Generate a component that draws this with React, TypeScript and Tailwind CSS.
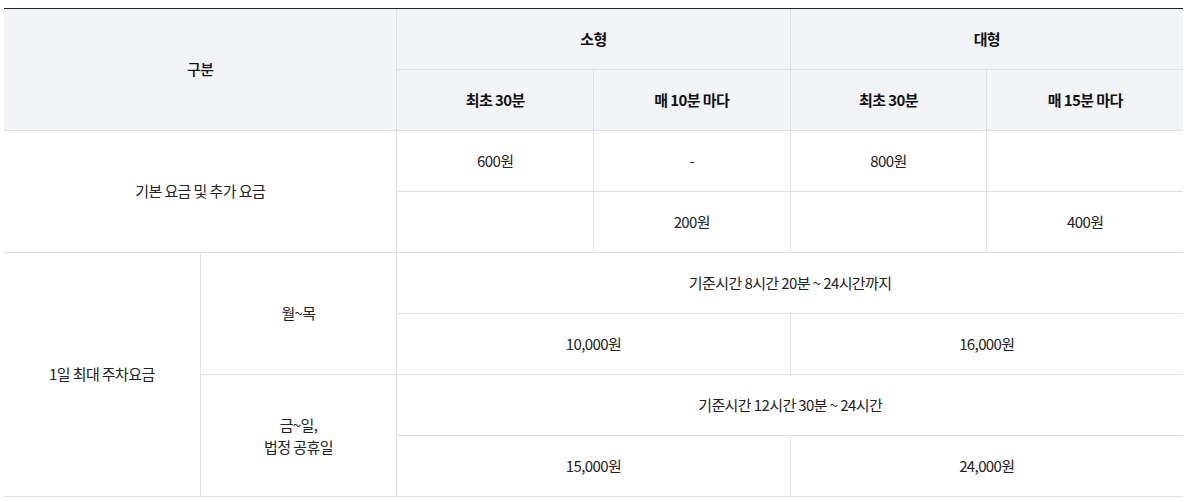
import React from 'react';

const th = 'flex items-center justify-center bg-[#f3f4f8] font-bold text-[#111]';
const td = 'flex items-center justify-center bg-white text-[#222] text-center';

export default function App() {
  return (
    <div className="bg-white min-h-[502px] pt-2 pl-1 font-['Noto_Sans_CJK_KR','Noto_Sans',sans-serif] text-[15px] tracking-[-0.04em]">
      <div className="w-[1179px] border-t border-[#222] bg-[#dde0e5] pb-px grid grid-cols-6 grid-rows-[repeat(8,60px)] gap-px">
        {/* header */}
        <div className={`${th} col-span-2 row-span-2 font-medium`}>구분</div>
        <div className={`${th} col-span-2`}>소형</div>
        <div className={`${th} col-span-2`}>대형</div>
        <div className={th}>최초 30분</div>
        <div className={th}>매 10분 마다</div>
        <div className={th}>최초 30분</div>
        <div className={th}>매 15분 마다</div>

        {/* 기본 요금 */}
        <div className={`${td} col-span-2 row-span-2`}>기본 요금 및 추가 요금</div>
        <div className={td}>600원</div>
        <div className={td}>-</div>
        <div className={td}>800원</div>
        <div className={td}></div>
        <div className={td}></div>
        <div className={td}>200원</div>
        <div className={td}></div>
        <div className={td}>400원</div>

        {/* 1일 최대 */}
        <div className={`${td} row-span-4`}>1일 최대 주차요금</div>
        <div className={`${td} row-span-2`}>월~목</div>
        <div className={`${td} col-span-4`}>기준시간 8시간 20분 ~ 24시간까지</div>
        <div className={`${td} col-span-2`}>10,000원</div>
        <div className={`${td} col-span-2`}>16,000원</div>
        <div className={`${td} row-span-2 leading-[22px]`}>
          금~일,
          <br />
          법정 공휴일
        </div>
        <div className={`${td} col-span-4`}>기준시간 12시간 30분 ~ 24시간</div>
        <div className={`${td} col-span-2`}>15,000원</div>
        <div className={`${td} col-span-2`}>24,000원</div>
      </div>
    </div>
  );
}
